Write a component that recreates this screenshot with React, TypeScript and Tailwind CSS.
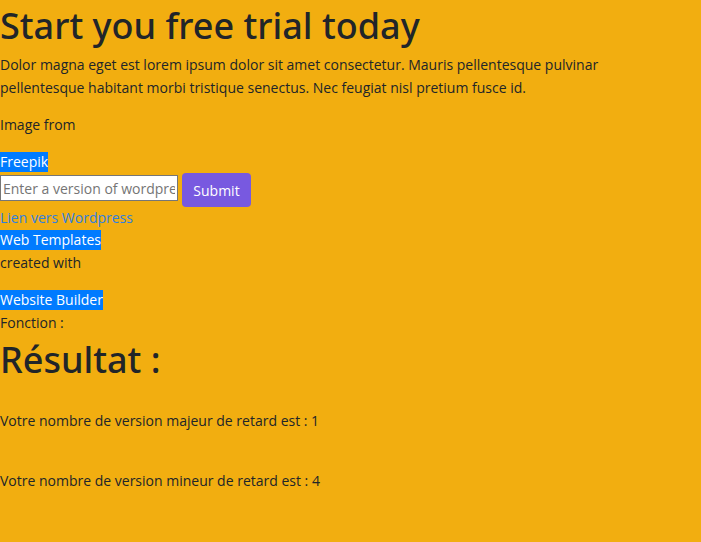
import type { ReactNode } from "react";

function HighlightLink({ children }: { children: ReactNode }) {
  return (
    <div className="leading-[22px]">
      <a href="#" className="bg-[#007bff] pb-px text-white">{children}</a>
    </div>
  );
}

function Title({ children }: { children: ReactNode }) {
  return <h1 className="mb-0.5 font-['Noto_Sans','Open_Sans',sans-serif] text-4xl leading-[51px] font-medium">{children}</h1>;
}

export default function App() {
  return (
    <main className="min-h-screen bg-[#f2ae10] font-['Open_Sans','Noto_Sans',sans-serif] text-sm leading-[23px] text-[#212529]">
      <Title>Start you free trial today</Title>
      <p className="mb-[14px] max-w-[640px]">
        Dolor magna eget est lorem ipsum dolor sit amet consectetur. Mauris pellentesque pulvinar
        pellentesque habitant morbi tristique senectus. Nec feugiat nisl pretium fusce id.
      </p>
      <p className="mb-[15px]">Image from</p>
      <HighlightLink>Freepik</HighlightLink>
      <form className="flex items-start gap-1" onSubmit={(e) => e.preventDefault()}>
        <input
          type="text"
          aria-label="Version"
          placeholder="Enter a version of wordpress"
          className="mt-0.5 h-[26px] w-[178px] border border-[#767676] bg-white px-0.5 leading-5 placeholder:text-[#757575]"
        />
        <button type="submit" className="h-[34px] w-[69px] rounded bg-[#7859e0] text-white">
          Submit
        </button>
      </form>
      <div className="leading-[22px]">
        <a href="#" className="text-[#2f80e0]">Lien vers Wordpress</a>
      </div>
      <HighlightLink>Web Templates</HighlightLink>
      <p className="mb-[15px]">created with</p>
      <HighlightLink>Website Builder</HighlightLink>
      <div>Fonction :</div>
      <Title>Résultat :</Title>
      <p className="mt-6 mb-[37px]">Votre nombre de version majeur de retard est : 1</p>
      <p>Votre nombre de version mineur de retard est : 4</p>
    </main>
  );
}
